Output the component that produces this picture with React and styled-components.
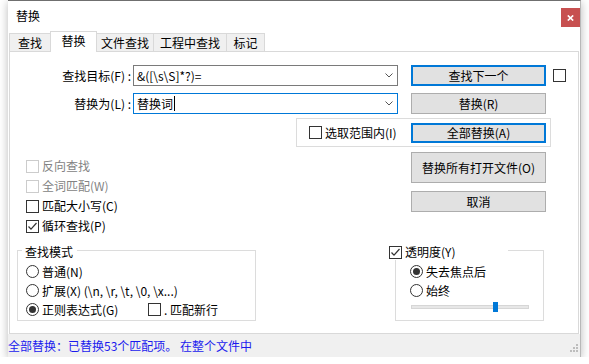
import React from 'react';
import styled, { createGlobalStyle } from 'styled-components';

const Global = createGlobalStyle`
  html, body { margin: 0; padding: 0; background: #fff; }
  body {
    font-family: "Noto Sans CJK SC", "Microsoft YaHei UI", sans-serif;
    font-size: 12px;
    color: #000;
  }
  * { box-sizing: border-box; }
`;

const Window = styled.div`
  margin-left: 8px;
  width: 573px;
  height: 357px;
  border-top: 1px solid #6f6f6f;
  border-right: 1px solid #b8b8b8;
  background: #fff;
  box-shadow: 0 2px 9px rgba(0, 0, 0, 0.28);
  display: flex;
  flex-direction: column;
`;

const TitleBar = styled.div`
  height: 30px;
  display: flex;
  justify-content: space-between;
  align-items: flex-start;
  padding: 7px 0 0 8px;
`;

const TitleText = styled.div`
  line-height: 16px;
  font-size: 12px;
`;

const CloseButton = styled.div`
  width: 19px;
  height: 19px;
  background: #c75050;
  display: flex;
  align-items: center;
  justify-content: center;
`;

const TabStrip = styled.div`
  height: 20px;
  display: flex;
  align-items: flex-end;
  padding-left: 1px;
  position: relative;
  z-index: 1;
`;

const Tab = styled.div`
  position: relative;
  z-index: ${p => (p.$active ? 2 : 1)};
  width: ${p => p.$w}px;
  height: ${p => (p.$active ? 21 : 18)}px;
  margin-left: ${p => (p.$first ? 0 : -1)}px;
  margin-bottom: ${p => (p.$active ? -1 : 0)}px;
  border: 1px solid #d9d9d9;
  border-bottom: none;
  background: ${p => (p.$active ? '#fff' : '#f0f0f0')};
  display: flex;
  align-items: center;
  justify-content: center;
  padding-bottom: ${p => (p.$active ? 3 : 0)}px;
  line-height: 16px;
  white-space: nowrap;
`;

const Panel = styled.div`
  margin-left: 1px;
  width: 570px;
  height: 283px;
  border: 1px solid #d9d9d9;
  padding-top: 13px;
  display: flex;
  flex-direction: column;
`;

const Row = styled.div`
  display: flex;
  align-items: center;
  height: 21px;
  margin-top: ${p => p.$mt || 0}px;
`;

const FieldLabel = styled.div`
  width: 121px;
  text-align: right;
  white-space: nowrap;
  line-height: 16px;
`;

const Combo = styled.div`
  width: 265px;
  height: 21px;
  margin-left: 2px;
  border: 1px solid ${p => (p.$focus ? '#0078d7' : '#7a7a7a')};
  background: #fff;
  display: flex;
  align-items: center;
  padding: 0 4px 0 3px;
`;

const ComboText = styled.div`
  flex: 1;
  display: flex;
  align-items: center;
  line-height: 16px;
  white-space: nowrap;
`;

const Caret = styled.span`
  display: inline-block;
  width: 1px;
  height: 15px;
  background: #000;
  margin-left: 1px;
`;

const Button = styled.div`
  width: 135px;
  height: ${p => p.$h || 21}px;
  margin-left: ${p => (p.$auto ? 'auto' : `${p.$ml || 0}px`)};
  border: ${p => (p.$default ? '2px solid #0078d7' : '1px solid #adadad')};
  background: #e1e1e1;
  display: flex;
  align-items: center;
  justify-content: center;
  line-height: 16px;
  white-space: nowrap;
  flex-shrink: 0;
`;

const Box = styled.span`
  width: 13px;
  height: 13px;
  flex-shrink: 0;
  border: 1px solid ${p => (p.$disabled ? '#cccccc' : '#333333')};
  background: #fff;
  display: inline-flex;
  align-items: center;
  justify-content: center;
  margin-left: ${p => p.$ml || 0}px;
`;

const Round = styled.span`
  width: 13px;
  height: 13px;
  flex-shrink: 0;
  border: 1px solid #333333;
  border-radius: 50%;
  background: #fff;
  display: inline-flex;
  align-items: center;
  justify-content: center;
  &::after {
    content: '';
    display: ${p => (p.$on ? 'block' : 'none')};
    width: 7px;
    height: 7px;
    border-radius: 50%;
    background: #333333;
  }
`;

const Option = styled.div`
  display: flex;
  align-items: center;
  gap: 3px;
  height: ${p => p.$h || 19}px;
  width: ${p => (p.$w ? `${p.$w}px` : 'auto')};
  flex-shrink: 0;
  line-height: 16px;
  white-space: nowrap;
  color: ${p => (p.$disabled ? '#838383' : '#000')};
`;

const SelectionGroup = styled.div`
  margin-top: 4px;
  margin-left: 286px;
  width: 255px;
  height: 29px;
  border: 1px solid #dcdcdc;
  display: flex;
  align-items: center;
  padding: 0 4px 0 12px;
`;

const Lower = styled.div`
  display: flex;
  flex: 1;
`;

const LeftCol = styled.div`
  width: 379px;
  display: flex;
  flex-direction: column;
  padding-top: 9px;
`;

const CheckList = styled.div`
  display: flex;
  flex-direction: column;
  padding-left: 16px;
`;

const GroupBox = styled.div`
  position: relative;
  margin-top: ${p => p.$mt}px;
  margin-left: ${p => p.$ml}px;
  width: ${p => p.$w}px;
  height: 71px;
  border: 1px solid #dcdcdc;
  padding: 11px 0 0 ${p => p.$pl}px;
  display: flex;
  flex-direction: column;
`;

const Legend = styled.div`
  position: absolute;
  top: ${p => p.$top}px;
  left: ${p => p.$left}px;
  width: ${p => p.$w}px;
  height: 16px;
  background: #fff;
  display: flex;
  align-items: center;
  gap: 3px;
  padding-left: ${p => p.$pl || 0}px;
  line-height: 16px;
  white-space: nowrap;
`;

const InlineRow = styled.div`
  display: flex;
  align-items: center;
`;

const RightCol = styled.div`
  flex: 1;
  display: flex;
  flex-direction: column;
  padding-top: 5px;
`;

const ButtonStack = styled.div`
  display: flex;
  flex-direction: column;
  gap: 8px;
  margin-left: 22px;
`;

const Slider = styled.div`
  position: relative;
  margin-top: 2px;
  margin-left: 1px;
  width: 118px;
  height: 10px;
  display: flex;
  align-items: center;
`;

const Track = styled.div`
  width: 100%;
  height: 4px;
  background: #e7e7e7;
  border: 1px solid #d6d6d6;
`;

const Thumb = styled.div`
  position: absolute;
  top: 0;
  width: 5px;
  height: 10px;
  background: #0078d7;
`;

const StatusBar = styled.div`
  height: 23px;
  background: #f0f0f0;
  display: flex;
  align-items: center;
  justify-content: space-between;
  color: #1a1aee;
  line-height: 16px;
  padding-right: 1px;
`;

const Grip = styled.svg`
  align-self: flex-end;
  margin-bottom: 2px;
`;

const Check = () => (
  <svg width="11" height="11" viewBox="0 0 11 11">
    <polyline points="1.5,5.5 4,8.2 9.5,2" fill="none" stroke="#333" strokeWidth="1.2" />
  </svg>
);

const CheckBox = ({ checked, disabled, ml }) => (
  <Box $disabled={disabled} $ml={ml}>{checked ? <Check /> : null}</Box>
);

const Chevron = () => (
  <svg width="8" height="5" viewBox="0 0 8 5">
    <polyline points="0.5,0.5 4,4 7.5,0.5" fill="none" stroke="#555" strokeWidth="1" />
  </svg>
);

const tabs = [
  { label: '查找', w: 42 },
  { label: '替换', w: 47, active: true },
  { label: '文件查找', w: 58 },
  { label: '工程中查找', w: 74 },
  { label: '标记', w: 39 },
];

export default function App() {
  return (
    <>
      <Global />
      <Window>
        <TitleBar>
          <TitleText>替换</TitleText>
          <CloseButton>
            <svg width="7" height="6" viewBox="0 0 7 6">
              <path d="M0.8 0.5 L6.2 5.5 M6.2 0.5 L0.8 5.5" stroke="#fff" strokeWidth="1.7" />
            </svg>
          </CloseButton>
        </TitleBar>
        <TabStrip>
          {tabs.map((t, i) => (
            <Tab key={t.label} $w={t.w} $active={t.active} $first={i === 0}>
              {t.label}
            </Tab>
          ))}
        </TabStrip>
        <Panel>
          <Row>
            <FieldLabel>查找目标(F) :</FieldLabel>
            <Combo>
              <ComboText>&amp;([\s\S]*?)=</ComboText>
              <Chevron />
            </Combo>
            <Button $default $ml={13}>查找下一个</Button>
            <CheckBox ml={7} />
          </Row>
          <Row $mt={7}>
            <FieldLabel>替换为(L) :</FieldLabel>
            <Combo $focus>
              <ComboText>替换词<Caret /></ComboText>
              <Chevron />
            </Combo>
            <Button $ml={13}>替换(R)</Button>
          </Row>
          <SelectionGroup>
            <Option>
              <CheckBox />
              选取范围内(I)
            </Option>
            <Button $auto $h={20} $default>全部替换(A)</Button>
          </SelectionGroup>
          <Lower>
            <LeftCol>
              <CheckList>
                <Option $h={20} $disabled><CheckBox disabled />反向查找</Option>
                <Option $h={20} $disabled><CheckBox disabled />全词匹配(W)</Option>
                <Option $h={20}><CheckBox />匹配大小写(C)</Option>
                <Option $h={20}><CheckBox checked />循环查找(P)</Option>
              </CheckList>
              <GroupBox $mt={14} $ml={7} $w={239} $pl={8}>
                <Legend $top={-7} $left={4} $w={55} $pl={3}>查找模式</Legend>
                <Option><Round />普通(N)</Option>
                <Option><Round />扩展(X) (\n, \r, \t, \0, \x...)</Option>
                <InlineRow>
                  <Option $w={122}><Round $on />正则表达式(G)</Option>
                  <Option><CheckBox />. 匹配新行</Option>
                </InlineRow>
              </GroupBox>
            </LeftCol>
            <RightCol>
              <ButtonStack>
                <Button $h={31}>替换所有打开文件(O)</Button>
                <Button>取消</Button>
              </ButtonStack>
              <GroupBox $mt={38} $ml={6} $w={149} $pl={14}>
                <Legend $top={-7} $left={-7} $w={119}>
                  <CheckBox checked />透明度(Y)
                </Legend>
                <Option><Round $on />失去焦点后</Option>
                <Option><Round />始终</Option>
                <Slider>
                  <Track />
                  <Thumb style={{ left: 82 }} />
                </Slider>
              </GroupBox>
            </RightCol>
          </Lower>
        </Panel>
        <StatusBar>
          <span>全部替换：已替换53个匹配项。 在整个文件中</span>
          <Grip width="12" height="12" viewBox="0 0 12 12">
            <g fill="#bdbdbd">
              <rect x="9" y="1" width="2" height="2" />
              <rect x="6" y="4" width="2" height="2" />
              <rect x="9" y="4" width="2" height="2" />
              <rect x="3" y="7" width="2" height="2" />
              <rect x="6" y="7" width="2" height="2" />
              <rect x="9" y="7" width="2" height="2" />
            </g>
          </Grip>
        </StatusBar>
      </Window>
    </>
  );
}
